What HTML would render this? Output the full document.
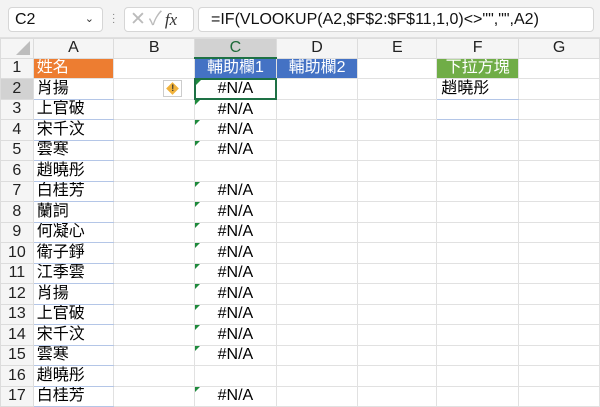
<!DOCTYPE html>
<html><head><meta charset="utf-8"><style>
*{margin:0;padding:0;box-sizing:border-box}
body{width:600px;height:404px;overflow:hidden;background:#fff;font-family:"Liberation Sans","Noto Sans CJK TC",sans-serif;position:relative}
.top{position:absolute;left:0;top:0;width:600px;height:38px;background:#f3f3f3;border-bottom:1px solid #e0e0e0}
.box{position:absolute;top:7px;height:25px;background:#fff;border:1px solid #d6d6d6;border-radius:4px;font-size:16px;line-height:23px;color:#111}
table{position:absolute;left:0;top:38px;border-collapse:collapse;table-layout:fixed}
td{height:20.5px;border:1px solid #e1e1e1;font-size:16px;padding:0 3px;white-space:nowrap;overflow:hidden;color:#000;position:relative;line-height:18px}
tr.h td{height:19px;background:#f5f5f5;text-align:center;color:#222;border-color:#dcdcdc}
td.rh{background:#f5f5f5;text-align:center;color:#222;border-color:#dcdcdc;padding:0}
td.a{border-bottom:1px solid #b4c6e7;padding-left:3px}
td.c{text-align:center}
.tri{position:absolute;left:0;top:0;width:0;height:0;border-top:5px solid #1e8a3c;border-right:5px solid transparent}
.hd{color:#fff;text-align:center}
</style></head><body>
<div class="top">
<div class="box" style="left:8px;width:95px;padding-left:6px">C2<span style="position:absolute;right:8px;top:0;font-size:11px;color:#333">&#8964;</span></div>
<div style="position:absolute;left:112px;top:13px;color:#777;font-size:10px;line-height:4px">·<br>·<br>·</div>
<div class="box" style="left:124px;width:70px;color:#bbb;font-size:19px;padding-left:5px;letter-spacing:3px">✕✓<i style="color:#333;font-family:'Liberation Serif',serif;font-size:17px;letter-spacing:0">fx</i></div>
<div class="box" style="left:198px;width:396px;padding-left:12px;font-size:16px">=IF(VLOOKUP(A2,$F$2:$F$11,1,0)&lt;&gt;"","",A2)</div>
</div>
<table>
<colgroup><col style="width:33px"><col style="width:81px"><col style="width:82px"><col style="width:82px"><col style="width:82px"><col style="width:80px"><col style="width:82px"><col style="width:82px"></colgroup>
<tr class="h"><td style="position:relative"><div style="position:absolute;right:3px;bottom:3px;border-bottom:14px solid #bdbdbd;border-left:14px solid transparent"></div></td><td>A</td><td>B</td><td style="background:#d2d2d2;color:#1e6b3a;border-bottom:2px solid #1e7145">C</td><td>D</td><td>E</td><td>F</td><td>G</td></tr>
<tr><td class="rh">1</td><td class="hd" style="background:#ed7d31;text-align:left">姓名</td><td></td><td class="hd" style="background:#4472c4">輔助欄1</td><td class="hd" style="background:#4472c4">輔助欄2</td><td></td><td class="hd" style="background:#70ad47">下拉方塊</td><td></td></tr>
<tr><td class="rh" style="background:#d2d2d2">2</td><td class="a">肖揚</td><td><div style="position:absolute;left:49px;top:1px;width:19px;height:17px;border:1px solid #ccc;background:#fff"><div style="position:absolute;left:4px;top:3px;width:9px;height:9px;background:#f0b23c;transform:rotate(45deg)"></div><div style="position:absolute;left:0;top:0;width:17px;text-align:center;font-size:9px;line-height:15px;font-weight:bold;color:#333">!</div></div></td><td class="c" style="border:2px solid #1e7145"><div class="tri"></div>#N/A</td><td></td><td></td><td style="border-bottom:1px solid #b4c6e7;padding-left:4px">趙曉彤</td><td></td></tr>
<tr><td class="rh">3</td><td class="a">上官破</td><td></td><td class="c"><div class="tri"></div>#N/A</td><td></td><td></td><td style="border-bottom:1px solid #b4c6e7"></td><td></td></tr>
<tr><td class="rh">4</td><td class="a">宋千汶</td><td></td><td class="c"><div class="tri"></div>#N/A</td><td></td><td></td><td></td><td></td></tr>
<tr><td class="rh">5</td><td class="a">雲寒</td><td></td><td class="c"><div class="tri"></div>#N/A</td><td></td><td></td><td></td><td></td></tr>
<tr><td class="rh">6</td><td class="a">趙曉彤</td><td></td><td></td><td></td><td></td><td></td><td></td></tr>
<tr><td class="rh">7</td><td class="a">白桂芳</td><td></td><td class="c"><div class="tri"></div>#N/A</td><td></td><td></td><td></td><td></td></tr>
<tr><td class="rh">8</td><td class="a">蘭詞</td><td></td><td class="c"><div class="tri"></div>#N/A</td><td></td><td></td><td></td><td></td></tr>
<tr><td class="rh">9</td><td class="a">何凝心</td><td></td><td class="c"><div class="tri"></div>#N/A</td><td></td><td></td><td></td><td></td></tr>
<tr><td class="rh">10</td><td class="a">衛子錚</td><td></td><td class="c"><div class="tri"></div>#N/A</td><td></td><td></td><td></td><td></td></tr>
<tr><td class="rh">11</td><td class="a">江季雲</td><td></td><td class="c"><div class="tri"></div>#N/A</td><td></td><td></td><td></td><td></td></tr>
<tr><td class="rh">12</td><td class="a">肖揚</td><td></td><td class="c"><div class="tri"></div>#N/A</td><td></td><td></td><td></td><td></td></tr>
<tr><td class="rh">13</td><td class="a">上官破</td><td></td><td class="c"><div class="tri"></div>#N/A</td><td></td><td></td><td></td><td></td></tr>
<tr><td class="rh">14</td><td class="a">宋千汶</td><td></td><td class="c"><div class="tri"></div>#N/A</td><td></td><td></td><td></td><td></td></tr>
<tr><td class="rh">15</td><td class="a">雲寒</td><td></td><td class="c"><div class="tri"></div>#N/A</td><td></td><td></td><td></td><td></td></tr>
<tr><td class="rh">16</td><td class="a">趙曉彤</td><td></td><td></td><td></td><td></td><td></td><td></td></tr>
<tr><td class="rh">17</td><td class="a">白桂芳</td><td></td><td class="c"><div class="tri"></div>#N/A</td><td></td><td></td><td></td><td></td></tr>
</table>
</body></html>
